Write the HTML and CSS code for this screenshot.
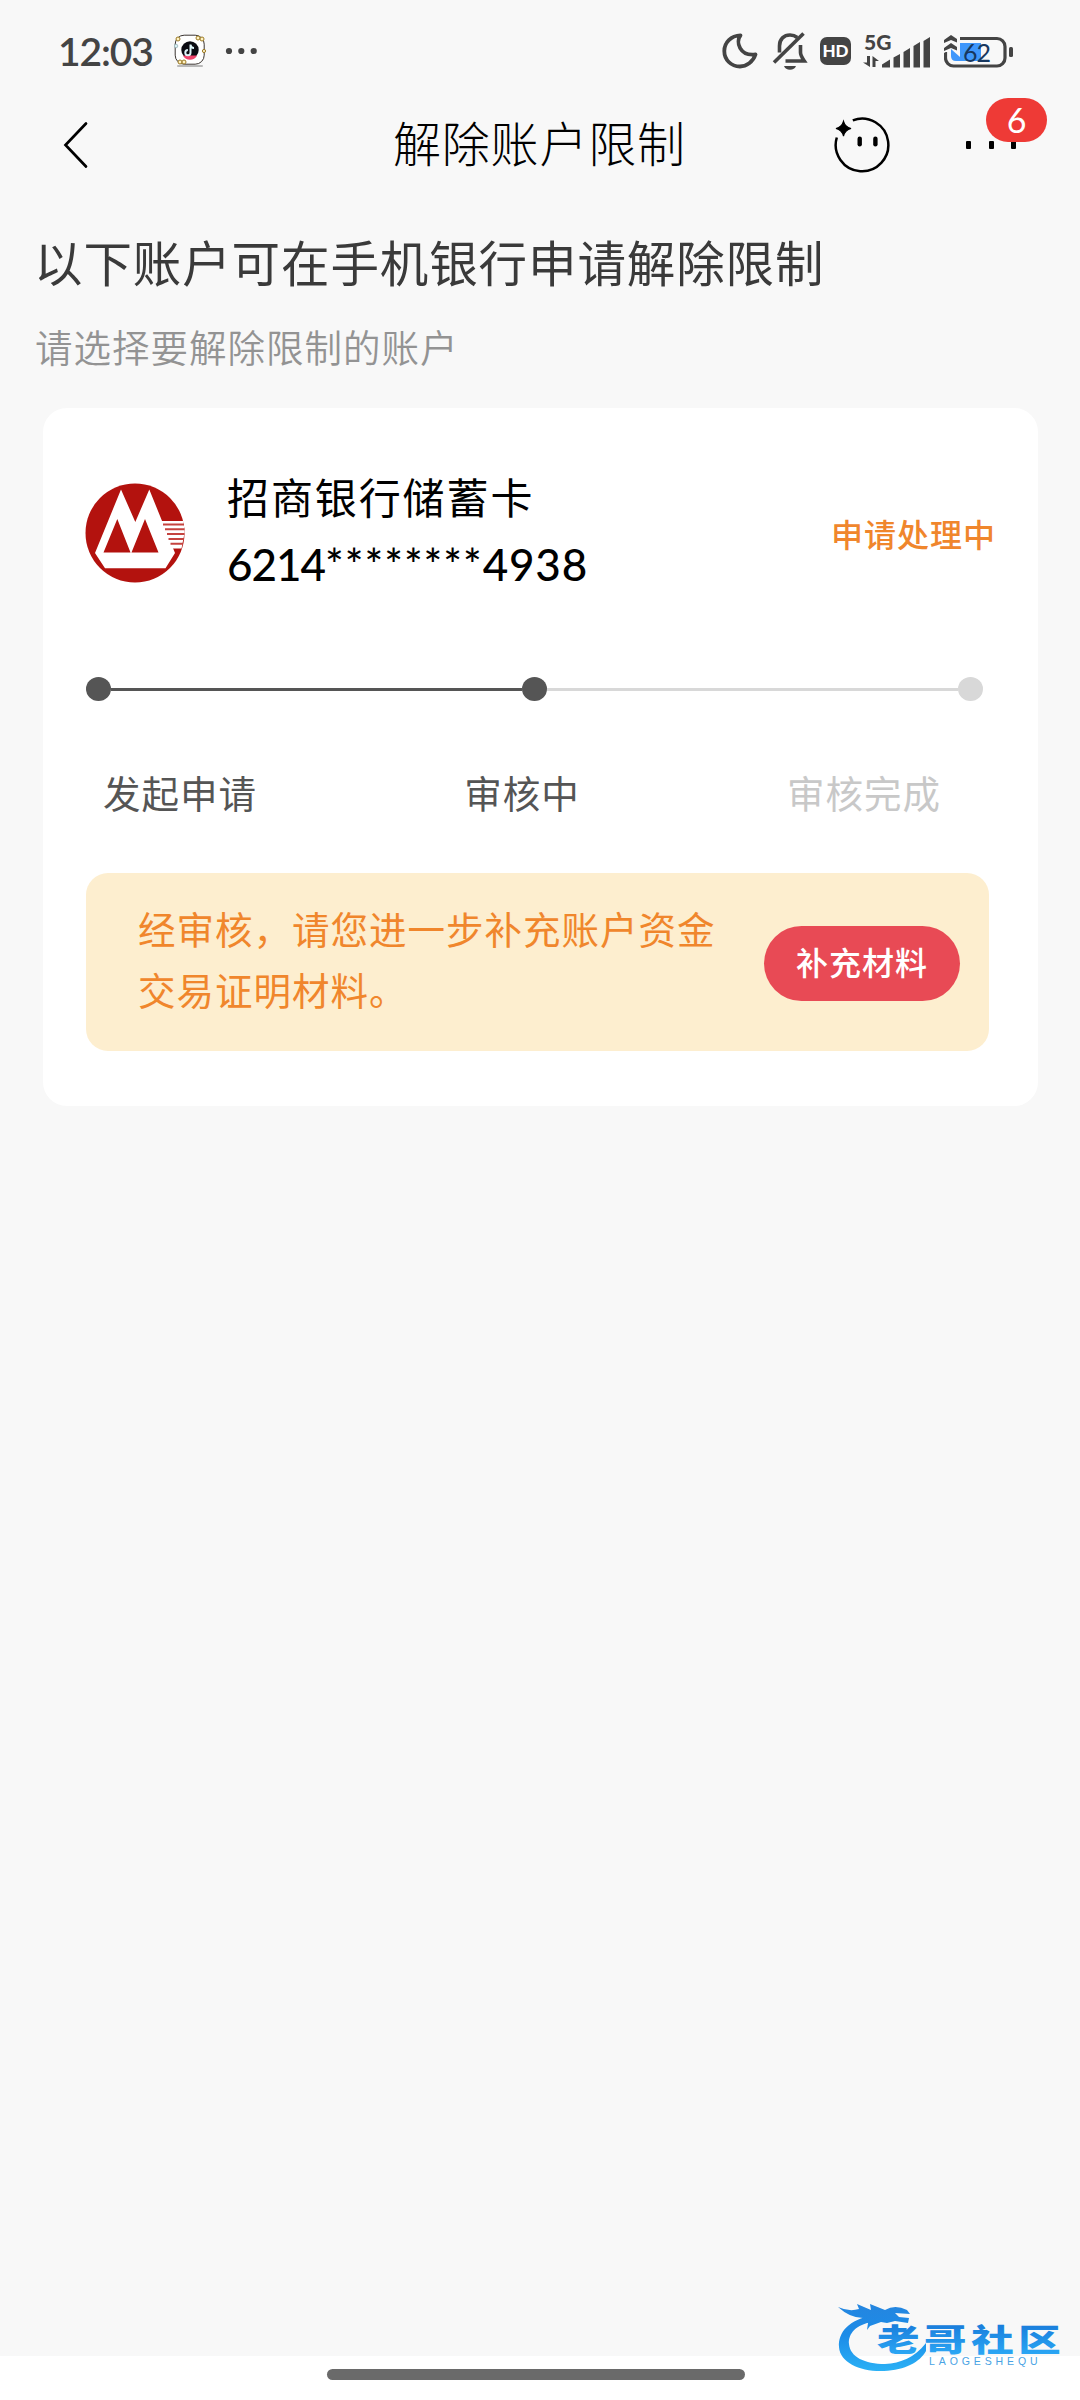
FILE: index.html
```html
<!DOCTYPE html>
<html lang="zh-CN">
<head>
<meta charset="utf-8">
<title>解除账户限制</title>
<link rel="stylesheet" href="styles.css">
</head>
<body>
<div class="screen">
  <header class="status-bar">
    <span class="clock">12:03</span>
    <svg class="app-icon" width="32" height="34" viewBox="0 0 32 34">
      <rect x="3" y="31" width="26" height="2" rx="1" fill="#b9b9b9"/>
      <rect x="1.2" y="1.2" width="29" height="29" rx="9" fill="#fff" stroke="#3a3430" stroke-width="1"/>
      <circle cx="16" cy="16" r="8.7" fill="#0b0b12"/>
      <path d="M9 21.5h14c-1.500 3-4 4.300-7 4.300s-5.500-1.300-7-4.300z" fill="#f0436c"/>
      <path d="M16.500 10.500v8.200a2.600 2.600 0 1 1-2.600-2.600M16.500 11c.4 2 1.800 3 3.500 3" fill="none" stroke="#dff6fa" stroke-width="2"/>
      <g fill="#fff3c4" stroke="#9c7a25" stroke-width="1"><circle cx="4" cy="5" r="2"/><circle cx="24" cy="4" r="2"/><circle cx="28" cy="5" r="2"/><circle cx="30" cy="17" r="1.600"/><circle cx="6" cy="28" r="2"/><circle cx="10" cy="28" r="2"/></g>
      <circle cx="2" cy="12" r="1.800" fill="#d8eef2" stroke="#8ba9ad" stroke-width=".7"/>
    </svg>
    <svg class="more-apps" width="32" height="8" viewBox="0 0 32 8" fill="#444"><circle cx="4" cy="4" r="3.100"/><circle cx="16.300" cy="4" r="3.100"/><circle cx="28.700" cy="4" r="3.100"/></svg>
    <div class="indicators">
      <svg width="36" height="38" viewBox="0 0 36 38"><path d="M18.500 3.300C13.500 10 17.500 24.500 33.500 22.500C31 30 24.500 34.500 18 34.500C9 34.500 2.300 27.600 2.300 19C2.300 10.500 9 3.500 18.500 3.300Z" fill="none" stroke="#444" stroke-width="3.800" stroke-linejoin="round"/></svg>
      <svg width="36" height="40" viewBox="0 0 36 40" fill="none" stroke="#444" stroke-width="3.600"><path d="M7.500 21.500V15C7.500 8 12 4 18 4c3 0 5.300.9 7.200 2.500M28.500 14v7.500c0 3 1.500 5 3.800 8.500H13.500"/><path d="M2 31.500L31.500 2.500"/><path d="M12 35h12c-1 2.500-3 3.700-6 3.700s-5-1.200-6-3.700z" fill="#444" stroke="none"/></svg>
      <span class="hd">HD</span>
      <span class="signal">
        <span class="net">5G</span>
        <svg width="68" height="34" viewBox="0 0 68 34" fill="#444"><path d="M4 22h3v11L0 28.500h4zM9.500 33V22l6.500 5h-3.500v6z"/><path d="M19 33.500v-3l8-5v8zM30.500 33.500V23.500l6.500-3.500v13.500zM40.500 33.500V18l6.500-4v19.500zM50.500 33.500V12l6.500-4v25.500zM60.500 33.500V7l6.500-4v30.500z"/></svg>
      </span>
      <span class="battery">
        <svg width="70" height="36" viewBox="0 0 70 36"><path d="M7 10h30v18H12q-5 0-5-5z" fill="#3f97fb"/><path d="M15 5.500h38a8 8 0 0 1 8 8V25a8 8 0 0 1-8 8H9.500a8 8 0 0 1-8-8V19" fill="none" stroke="#444" stroke-width="3.200"/><rect x="65" y="14" width="4" height="10" rx="1.500" fill="#444"/><path d="M0 8v12l7-4 9 8V2z" fill="#f8f8f8"/><path d="M0 7l7-5 6 4v3.500L7 7 0 10zM0 15l7-5 6 4v3.500L7 15 0 18z" fill="#444"/></svg>
        <span class="level">62</span>
      </span>
    </div>
  </header>

  <nav class="nav-bar">
    <svg class="back" width="28" height="48" viewBox="0 0 28 48"><path d="M25 2.500L4.500 24L25 45.500" fill="none" stroke="#000" stroke-width="2.700" stroke-linecap="round"/></svg>
    <h1 class="title">解除账户限制</h1>
    <svg class="assistant" width="58" height="58" viewBox="0 0 58 58"><path d="M19.800 4.300A26.300 26.300 0 1 1 3.800 21.500" fill="none" stroke="#000" stroke-width="2.500"/><path d="M10.500 5.500Q12 11 18 12.500Q12 14 10.500 20Q9 14 3 12.500Q9 11 10.500 5.500Z" stroke="#000" stroke-width="1.200"/><rect x="24.500" y="20.500" width="4.400" height="10" rx="2.200"/><rect x="40.200" y="20.500" width="4.400" height="10" rx="2.200"/></svg>
    <div class="menu">
      <i></i><i></i><i></i>
      <span class="badge">6</span>
    </div>
  </nav>

  <main class="content">
    <h2 class="heading">以下账户可在手机银行申请解除限制</h2>
    <p class="hint">请选择要解除限制的账户</p>

    <section class="card">
      <div class="account">
        <svg class="logo" width="100" height="100" viewBox="0 0 100 100">
          <circle cx="50" cy="50" r="49.500" fill="#b3120e"/>
          <path d="M36 6.500L50.300 39L64.300 6.500L90 70L80.500 85.300H20L10 70Z" fill="#fff"/>
          <path d="M32.300 36L18.500 69.500H45.500ZM60 36L46.500 69.500H73.500Z" fill="#b3120e"/>
          <path d="M76 38H98.500L99.500 50L96.500 65.500H86.500Z" fill="#fff"/>
          <path d="M78 41.500H99M80 46.300H99.500M82 51.100H99.500M83.500 55.900H99M85.500 60.700H98" stroke="#c5433f" stroke-width="2"/>
        </svg>
        <div class="account-info">
          <div class="bank">招商银行储蓄卡</div>
          <div class="number"><span class="prefix">6214</span><span class="mask">********</span>4938</div>
        </div>
        <span class="state">申请处理中</span>
      </div>

      <div class="track">
        <i class="dot"></i><i class="line"></i><i class="dot"></i><i class="line todo"></i><i class="dot todo"></i>
      </div>
      <div class="labels">
        <span>发起申请</span><span>审核中</span><span class="pending">审核完成</span>
      </div>

      <div class="notice">
        <p class="notice-text">经审核，请您进一步补充账户资金交易证明材料。</p>
        <button class="action">补充材料</button>
      </div>
    </section>
  </main>

  <footer class="home-area"><i class="home-bar"></i></footer>

  <svg class="watermark" width="240" height="86" viewBox="0 0 240 86">
    <defs><linearGradient id="blue" x1="0" y1="10" x2="0" y2="76" gradientUnits="userSpaceOnUse"><stop offset="0" stop-color="#2486e0"/><stop offset=".45" stop-color="#1c8ce8"/><stop offset="1" stop-color="#2bb2f6"/></linearGradient>
    <linearGradient id="name" x1="0" y1="-26" x2="0" y2="3" gradientUnits="userSpaceOnUse"><stop offset="0" stop-color="#1a7edc"/><stop offset="1" stop-color="#2aa6f4"/></linearGradient></defs>
    <g fill="url(#blue)">
      <path d="M38 19C14 24 3 36 4 51C5 67 26 76 49 75C70 74 85 66 91 55V47C79 62 66 67 50 68C30 68 15 61 14 48C13 38 21 28 38 26Z"/>
      <path d="M3 11Q14 16 24 13L22 8L36 14L35 8L50 14Q60 8 72 14L75 18L60 17L64 21L74 22L73 27L60 25L52 27L46 26L35 30L32 34L33 27L28 22Q15 22 3 11Z"/>
    </g>
    <text class="wm-name" transform="translate(42 55) scale(1.370 1)" y="0" x="0">老哥社区</text>
    <text class="wm-latin" x="94" y="68.500">LAOGESHEQU</text>
  </svg>
</div>
</body>
</html>
```
FILE: styles.css
```css
* { box-sizing: border-box; }
body { margin: 0; background: #f8f8f8; }
h1, h2, p { margin: 0; font-weight: 400; }
svg { display: block; flex: none; }

.screen {
  position: relative;
  display: flex;
  flex-direction: column;
  width: 1080px;
  height: 2400px;
  background: #f8f8f8;
  font-family: "Noto Sans CJK SC", sans-serif;
  overflow: hidden;
}

/* status bar */
.status-bar {
  display: flex;
  align-items: center;
  height: 102px;
  padding: 0 66px 0 58px;
  color: #444;
}
.clock { width: 116px; font: 600 39px/48px Lato, sans-serif; letter-spacing: -1.1px; }
.more-apps { margin-left: 19px; }
.indicators { display: flex; align-items: center; margin-left: auto; }
.indicators > svg + svg { margin-left: 14px; }
.hd {
  width: 31px;
  height: 28px;
  margin-left: 12px;
  border-radius: 7px;
  background: #444;
  color: #fff;
  font: 900 17px/28px Lato, sans-serif;
  text-align: center;
}
.signal { position: relative; margin-left: 12px; }
.net { position: absolute; left: 1px; top: -3px; font: 900 21px/22px Lato, sans-serif; }
.battery { position: relative; margin-left: 13px; }
.level { position: absolute; left: 19px; top: 5px; font: 400 25px/28px Lato, sans-serif; letter-spacing: -1px; color: #17375f; }

/* navigation bar */
.nav-bar {
  display: flex;
  align-items: center;
  height: 86px;
  padding: 0 64px 0 61px;
}
.title {
  width: 294px;
  margin-left: 304px;
  font-weight: 300;
  font-size: 48px;
  line-height: 60px;
  letter-spacing: 0.8px;
  white-space: nowrap;
  padding-bottom: 8px;
  color: #000;
}
.assistant { margin-left: 146px; }
.menu { position: relative; display: flex; justify-content: space-between; width: 50px; margin-left: auto; }
.menu i { width: 5px; height: 8px; border-radius: 1px; background: #000; }
.badge {
  position: absolute;
  left: 20px;
  top: -43px;
  width: 61px;
  height: 44px;
  border-radius: 22px;
  background: #ee3a36;
  color: #fff;
  font: 400 34px/43px Lato, sans-serif;
  text-align: center;
}

/* page */
.content { flex: 1; padding: 43px 42px 0 43px; }
.heading {
  margin-left: -9px;
  font-size: 48.500px;
  line-height: 60px;
  letter-spacing: 0.9px;
  font-weight: 400;
  color: #3a3a3a;
  white-space: nowrap;
}
.hint {
  margin: 30px 0 37px -8px;
  font-size: 37.5px;
  line-height: 50px;
  letter-spacing: 1px;
  font-weight: 350;
  color: #939393;
}
.card { height: 698px; padding: 54px 49px 55px 43px; border-radius: 24px; background: #fff; }
.account { display: flex; align-items: center; height: 136px; }
.logo { margin: 5px 0 0 -1px; }
.account-info { margin-left: 42px; color: #000; line-height: 68px; }
.bank { font-size: 42px; letter-spacing: 1.9px; }
.number { font-family: Lato, sans-serif; font-weight: 500; font-size: 44px; letter-spacing: 0.8px; }
.prefix { letter-spacing: -1px; }
.mask { letter-spacing: 1px; }
.state {
  margin: 5px -7px 0 auto;
  font-size: 32px;
  font-weight: 500;
  letter-spacing: 1px;
  color: #f0862c;
}

/* progress */
.track { display: flex; align-items: center; width: 897px; margin-top: 79px; }
.dot { flex: none; width: 25px; height: 24px; border-radius: 50%; background: #555; }
.line { flex: 1; height: 3px; margin-top: 1px; background: #555; }
.todo { background: #d8d8d8; }
.labels {
  display: flex;
  justify-content: space-between;
  margin-top: 66px;
  padding: 0 48px 0 17px;
  font-size: 37.5px;
  line-height: 50px;
  letter-spacing: 1px;
  color: #555;
}
.pending { color: #c8c8c8; }

/* review notice */
.notice {
  display: flex;
  align-items: center;
  justify-content: space-between;
  height: 178px;
  margin-top: 56px;
  padding: 0 29px 8px 52px;
  border-radius: 22px;
  background: #fdeecf;
}
.notice-text { width: 582px; font-size: 37.5px; line-height: 61px; letter-spacing: 1px; color: #f0862c; }
.action {
  width: 196px;
  height: 75px;
  margin-top: 11px;
  padding: 0 0 5px;
  border: 0;
  border-radius: 38px;
  background: #e84a55;
  color: #fff;
  font: 500 32px/68px "Noto Sans CJK SC", sans-serif;
  letter-spacing: 1px;
}

/* system navigation */
.home-area { display: flex; justify-content: center; height: 44px; padding: 13px 8px 0 0; background: #fff; }
.home-bar { width: 418px; height: 11px; border-radius: 6px; background: #6a6a6a; }

.watermark { position: absolute; left: 835px; top: 2296px; }
.wm-name { font: 900 31px "Noto Sans CJK SC", sans-serif; letter-spacing: 3.400px; fill: url(#name); }
.wm-latin { font: 400 10.500px "Liberation Sans", sans-serif; letter-spacing: 3.900px; fill: #4aa3e4; }
```
